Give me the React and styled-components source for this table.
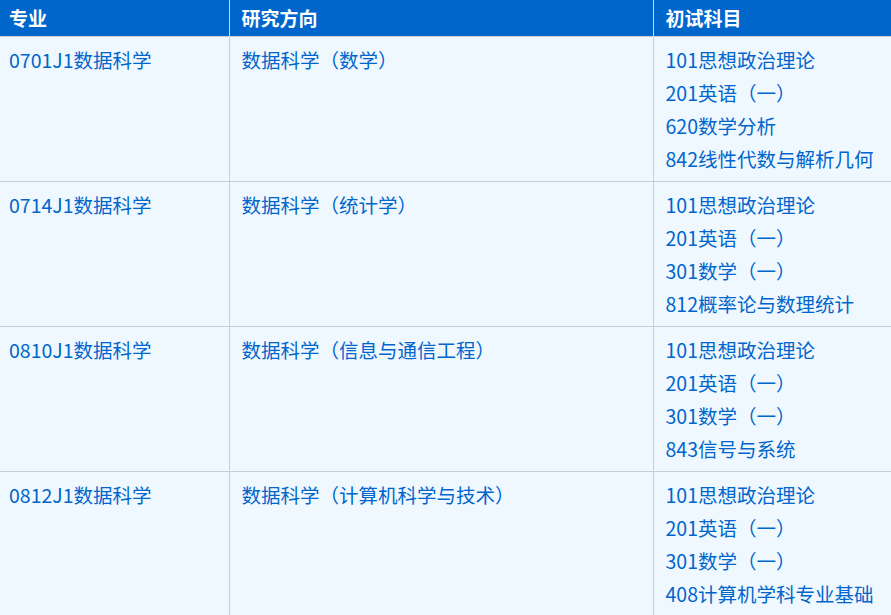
import React from "react";
import styled, { createGlobalStyle } from "styled-components";

const GlobalStyle = createGlobalStyle`
  body {
    margin: 0;
    background: #ffffff;
    font-family: "Noto Sans CJK SC", "Noto Sans", sans-serif;
  }
`;

const Table = styled.table`
  width: 891px;
  border-collapse: collapse;
  table-layout: fixed;
  background-color: #f0f8ff;
`;

const HeadCell = styled.th`
  height: 36px;
  padding: 0 12px;
  background-color: #0066cc;
  color: #ffffff;
  font-size: 19px;
  font-weight: 700;
  text-align: left;
  line-height: 36px;
  border-left: 1px solid #cfd8e3;
  &:first-child {
    border-left: none;
    padding-left: 9px;
  }
`;

const Cell = styled.td`
  vertical-align: top;
  padding: 6px 12px;
  height: 132px;
  border: 1px solid #cccccc;
  &:first-child {
    border-left: none;
    padding-left: 9px;
  }
`;

const Line = styled.div`
  font-size: 19.5px;
  line-height: 33px;
  color: #0066cc;
  white-space: nowrap;
`;

const rows = [
  {
    major: "0701J1数据科学",
    dir: "数据科学（数学）",
    subjects: ["101思想政治理论", "201英语（一）", "620数学分析", "842线性代数与解析几何"],
  },
  {
    major: "0714J1数据科学",
    dir: "数据科学（统计学）",
    subjects: ["101思想政治理论", "201英语（一）", "301数学（一）", "812概率论与数理统计"],
  },
  {
    major: "0810J1数据科学",
    dir: "数据科学（信息与通信工程）",
    subjects: ["101思想政治理论", "201英语（一）", "301数学（一）", "843信号与系统"],
  },
  {
    major: "0812J1数据科学",
    dir: "数据科学（计算机科学与技术）",
    subjects: ["101思想政治理论", "201英语（一）", "301数学（一）", "408计算机学科专业基础"],
  },
];

export default function App() {
  return (
    <>
      <GlobalStyle />
      <Table>
        <colgroup>
          <col style={{ width: 229 }} />
          <col style={{ width: 424 }} />
          <col style={{ width: 238 }} />
        </colgroup>
        <thead>
          <tr>
            <HeadCell>专业</HeadCell>
            <HeadCell>研究方向</HeadCell>
            <HeadCell>初试科目</HeadCell>
          </tr>
        </thead>
        <tbody>
          {rows.map((r) => (
            <tr key={r.major}>
              <Cell>
                <Line>{r.major}</Line>
              </Cell>
              <Cell>
                <Line>{r.dir}</Line>
              </Cell>
              <Cell>
                {r.subjects.map((s) => (
                  <Line key={s}>{s}</Line>
                ))}
              </Cell>
            </tr>
          ))}
        </tbody>
      </Table>
    </>
  );
}
